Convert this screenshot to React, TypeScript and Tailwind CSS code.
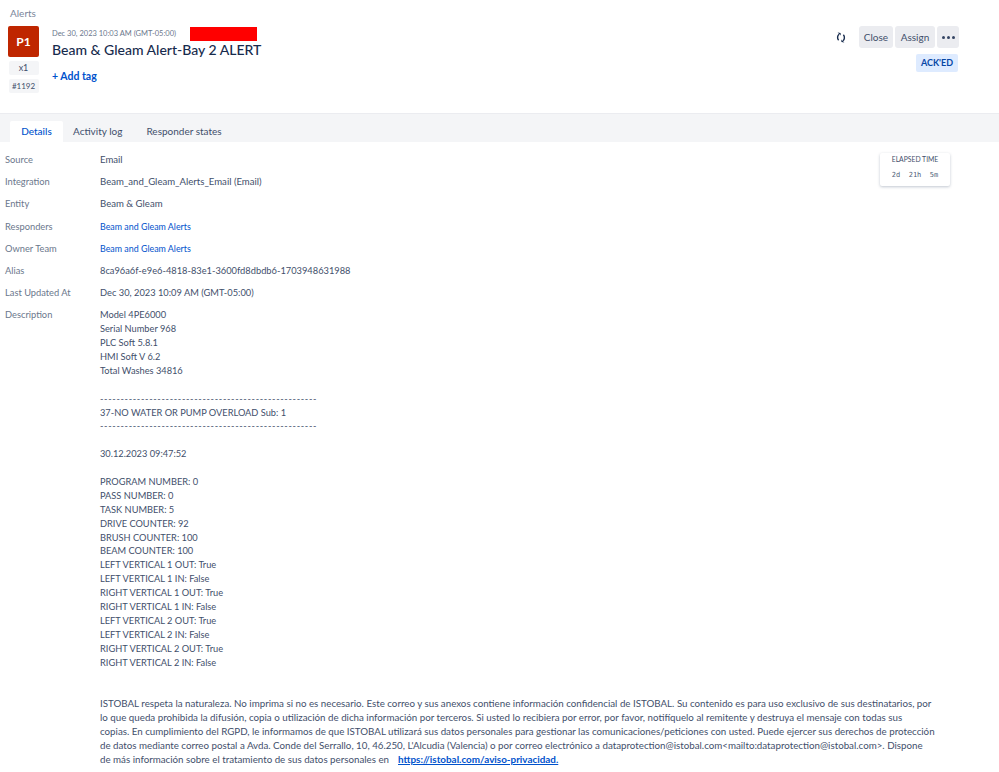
const font = { fontFamily: 'Lato, "Noto Sans", sans-serif' };

const rows = [
  { label: "Source", value: "Email", size: "text-[9.6px]" },
  { label: "Integration", value: "Beam_and_Gleam_Alerts_Email (Email)", size: "text-[9.6px]" },
  { label: "Entity", value: "Beam & Gleam", size: "text-[9.6px]" },
  { label: "Responders", value: "Beam and Gleam Alerts", size: "text-[8.9px]", link: true },
  { label: "Owner Team", value: "Beam and Gleam Alerts", size: "text-[8.9px]", link: true },
  { label: "Alias", value: "8ca96a6f-e9e6-4818-83e1-3600fd8dbdb6-1703948631988", size: "text-[9.3px]" },
  { label: "Last Updated At", value: "Dec 30, 2023 10:09 AM (GMT-05:00)", size: "text-[9.3px]" },
];

const dashes = "-----------------------------------------------------";

const description = [
  "Model 4PE6000",
  "Serial Number 968",
  "PLC Soft 5.8.1",
  "HMI Soft V 6.2",
  "Total Washes 34816",
  "",
  dashes,
  "37-NO WATER OR PUMP OVERLOAD Sub: 1",
  dashes,
  "",
  "30.12.2023 09:47:52",
  "",
  "PROGRAM NUMBER: 0",
  "PASS NUMBER: 0",
  "TASK NUMBER: 5",
  "DRIVE COUNTER: 92",
  "BRUSH COUNTER: 100",
  "BEAM COUNTER: 100",
  "LEFT VERTICAL 1 OUT: True",
  "LEFT VERTICAL 1 IN: False",
  "RIGHT VERTICAL 1 OUT: True",
  "RIGHT VERTICAL 1 IN: False",
  "LEFT VERTICAL 2 OUT: True",
  "LEFT VERTICAL 2 IN: False",
  "RIGHT VERTICAL 2 OUT: True",
  "RIGHT VERTICAL 2 IN: False",
  "",
  "",
];

const footer = [
  "ISTOBAL respeta la naturaleza. No imprima si no es necesario. Este correo y sus anexos contiene información confidencial de ISTOBAL. Su contenido es para uso exclusivo de sus destinatarios, por",
  "lo que queda prohibida la difusión, copia o utilización de dicha información por terceros. Si usted lo recibiera por error, por favor, notifíquelo al remitente y destruya el mensaje con todas sus",
  "copias. En cumplimiento del RGPD, le informamos de que ISTOBAL utilizará sus datos personales para gestionar las comunicaciones/peticiones con usted. Puede ejercer sus derechos de protección",
  "de datos mediante correo postal a Avda. Conde del Serrallo, 10, 46.250, L'Alcudia (Valencia) o por correo electrónico a dataprotection@istobal.com<mailto:dataprotection@istobal.com>. Dispone",
];

function SyncIcon() {
  return (
    <svg width="10" height="11" viewBox="0 0 10 11" fill="none" className="mr-[11px] text-[#172b4d]">
      <path d="M3 2.2C1.4 3.4 1 6.4 2.6 8.2" stroke="currentColor" strokeWidth="1.4" />
      <path d="M7 8.8C8.6 7.6 9 4.6 7.4 2.8" stroke="currentColor" strokeWidth="1.4" />
      <path d="M1.6 .6L4.6 1V3.6Z" fill="currentColor" />
      <path d="M8.4 10.4L5.4 10V7.4Z" fill="currentColor" />
    </svg>
  );
}

export default function App() {
  return (
    <div style={font} className="w-[999px] h-[772px] overflow-hidden bg-white text-[#3f4f6b]">
      {/* Header */}
      <div className="h-[114px] border-b border-[#ebecf0] flex pl-[8px] pr-[40px]">
        <div className="flex-1">
          <p className="pt-[7px] pl-[2px] text-[10px] leading-[13px] text-[#7a869a]">Alerts</p>
          <div className="flex mt-[6px]">
            <div className="w-[31px] flex flex-col items-center">
              <div className="w-[31px] h-[31px] rounded-[2px] bg-[#bf2600] text-white text-[12px] font-bold flex items-center justify-center">
                P1
              </div>
              <div className="mt-[4px] w-[30px] h-[14px] rounded-[2px] bg-[#f4f5f7] text-[9px] flex items-center justify-center">x1</div>
              <div className="mt-[4px] w-[30px] h-[14px] rounded-[2px] bg-[#f4f5f7] text-[8px] flex items-center justify-center">#1192</div>
            </div>
            <div className="ml-[13px]">
              <div className="flex items-center h-[14px] mt-[1px]">
                <span className="w-[124px] text-[7.5px] text-[#6b778c] whitespace-nowrap">Dec 30, 2023 10:03 AM (GMT-05:00)</span>
                <span className="ml-[14px] w-[67px] h-[14px] bg-[#ff0000]"></span>
              </div>
              <h1 className="text-[14px] leading-[18px] font-medium text-[#172b4d]">Beam &amp; Gleam Alert-Bay 2 ALERT</h1>
              <p className="mt-[10px] text-[10.5px] leading-[14px] font-bold text-[#0052cc]">+ Add tag</p>
            </div>
          </div>
        </div>
        <div className="flex flex-col items-end pt-[26px]">
          <div className="flex items-center gap-[2px]">
            <SyncIcon />
            <button className="h-[22px] w-[34px] rounded-[3px] bg-[#ebecf0] text-[10px]">Close</button>
            <button className="h-[22px] w-[40px] rounded-[3px] bg-[#ebecf0] text-[10px]">Assign</button>
            <button className="h-[22px] w-[22px] rounded-[3px] bg-[#ebecf0] text-[10px] flex items-center justify-center gap-[2px]">
              <span className="w-[3px] h-[3px] rounded-full bg-[#344563]"></span>
              <span className="w-[3px] h-[3px] rounded-full bg-[#344563]"></span>
              <span className="w-[3px] h-[3px] rounded-full bg-[#344563]"></span>
            </button>
          </div>
          <span className="mt-[6px] mr-[1px] h-[18px] w-[42px] rounded-[2px] bg-[#deebff] text-[#0747a6] text-[9px] font-bold flex items-center justify-center">
            ACK'ED
          </span>
        </div>
      </div>

      {/* Tabs */}
      <div className="h-[28px] bg-[#f4f5f7] flex items-end pl-[10px] text-[10px]">
        <div className="w-[53px] h-[21px] bg-white rounded-t-[2px] text-[#0052cc] font-medium flex items-center justify-center">Details</div>
        <div className="ml-[10px] h-[21px] flex items-center">Activity log</div>
        <div className="ml-[24px] h-[21px] flex items-center">Responder states</div>
      </div>

      {/* Details */}
      <div className="relative pl-[5px] pt-[11px]">
        <div className="absolute left-[880px] top-[11px] w-[70px] h-[33px] rounded-[2px] bg-white shadow-[0_1px_3px_rgba(9,30,66,0.25)] text-center">
          <p className="mt-[1px] text-[6.8px] leading-[11px]">ELAPSED TIME</p>
          <p className="mt-[5px] text-[7px] leading-[11px] text-[#505f79]" style={{ fontFamily: '"DejaVu Sans Mono", monospace' }}>2d&nbsp; 21h&nbsp; 5m</p>
        </div>
        {rows.map((row) => (
          <div key={row.label} className="flex h-[22.2px] items-start">
            <div className="w-[95px] text-[9.3px] text-[#6b778c] leading-[14px]">{row.label}</div>
            <div className={row.link ? `${row.size} text-[#0052cc] leading-[14px]` : `${row.size} leading-[14px]`}>{row.value}</div>
          </div>
        ))}
        <div className="flex">
          <div className="w-[95px] text-[9.3px] text-[#6b778c] leading-[14px]">Description</div>
          <div className="text-[9.25px] leading-[13.9px] w-[850px]">
            {description.map((line, i) => (
              <div key={i} className={line === dashes ? "h-[13.9px] whitespace-nowrap tracking-[0.66px]" : "h-[13.9px] whitespace-nowrap"}>
                {line}
              </div>
            ))}
            {footer.map((line) => (
              <div key={line} className="h-[13.9px] text-[9.75px] whitespace-nowrap">{line}</div>
            ))}
            <div className="h-[13.9px] text-[9.75px] whitespace-nowrap">
              de más información sobre el tratamiento de sus datos personales en&nbsp;{" "}
              <a className="ml-[4px] text-[9.9px] text-[#0052cc] font-bold underline">https://istobal.com/aviso-privacidad.</a>
            </div>
          </div>
        </div>
      </div>
    </div>
  );
}
